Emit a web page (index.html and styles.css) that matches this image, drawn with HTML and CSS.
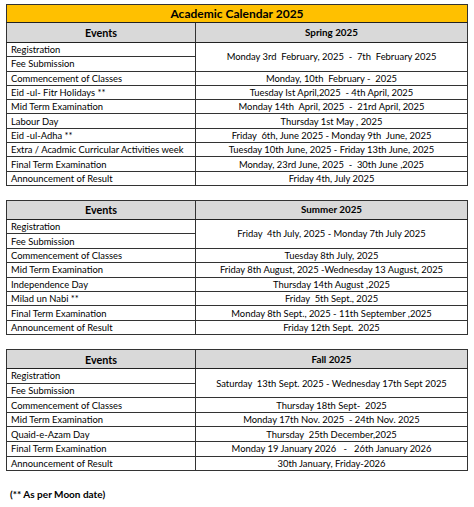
FILE: index.html
```html
<!DOCTYPE html>
<html>
<head>
<meta charset="utf-8">
<link rel="stylesheet" href="styles.css">
</head>
<body>
<div class="page">
  <table class="cal t1">
    <colgroup><col class="c1"><col class="c2"></colgroup>
    <tr class="title"><td colspan="2">Academic Calendar 2025</td></tr>
    <tr class="head"><td class="ev">Events</td><td class="term">Spring 2025</td></tr>
    <tr><td>Registration</td><td class="d" rowspan="2">Monday 3rd&nbsp; February, 2025&nbsp; -&nbsp; 7th&nbsp; February 2025</td></tr>
    <tr><td>Fee Submission</td></tr>
    <tr><td>Commencement of Classes</td><td class="d">Monday, 10th&nbsp; February -&nbsp; 2025</td></tr>
    <tr><td>Eid -ul- Fitr Holidays **</td><td class="d">Tuesday Ist April,2025&nbsp; - 4th April, 2025</td></tr>
    <tr><td>Mid Term Examination</td><td class="d">Monday 14th&nbsp; April, 2025&nbsp; -&nbsp; 21rd April, 2025</td></tr>
    <tr><td>Labour Day</td><td class="d">Thursday 1st May , 2025</td></tr>
    <tr><td>Eid -ul-Adha **</td><td class="d">Friday&nbsp; 6th, June 2025 - Monday 9th&nbsp; June, 2025</td></tr>
    <tr><td>Extra / Acadmic Curricular Activities week</td><td class="d">Tuesday 10th June, 2025 - Friday 13th June, 2025</td></tr>
    <tr><td>Final Term Examination</td><td class="d">Monday, 23rd June, 2025&nbsp; -&nbsp; 30th June ,2025</td></tr>
    <tr><td>Announcement of Result</td><td class="d">Friday 4th, July 2025</td></tr>
  </table>

  <table class="cal t2">
    <colgroup><col class="c1"><col class="c2"></colgroup>
    <tr class="head"><td class="ev">Events</td><td class="term">Summer 2025</td></tr>
    <tr><td>Registration</td><td class="d" rowspan="2">Friday&nbsp; 4th July, 2025 - Monday 7th July 2025</td></tr>
    <tr><td>Fee Submission</td></tr>
    <tr><td>Commencement of Classes</td><td class="d">Tuesday 8th July, 2025</td></tr>
    <tr><td>Mid Term Examination</td><td class="d">Friday 8th August, 2025 -Wednesday 13 August, 2025</td></tr>
    <tr><td>Independence Day</td><td class="d">Thursday 14th August ,2025</td></tr>
    <tr><td>Milad un Nabi **</td><td class="d">Friday&nbsp; 5th Sept., 2025</td></tr>
    <tr><td>Final Term Examination</td><td class="d">Monday 8th Sept., 2025 - 11th September ,2025</td></tr>
    <tr><td>Announcement of Result</td><td class="d">Friday 12th Sept.&nbsp; 2025</td></tr>
  </table>

  <table class="cal t3">
    <colgroup><col class="c1"><col class="c2"></colgroup>
    <tr class="head"><td class="ev">Events</td><td class="term">Fall 2025</td></tr>
    <tr><td>Registration</td><td class="d" rowspan="2">Saturday&nbsp; 13th Sept. 2025 - Wednesday 17th Sept 2025</td></tr>
    <tr><td>Fee Submission</td></tr>
    <tr><td>Commencement of Classes</td><td class="d">Thursday 18th Sept-&nbsp; 2025</td></tr>
    <tr><td>Mid Term Examination</td><td class="d">Monday 17th Nov. 2025&nbsp; - 24th Nov. 2025</td></tr>
    <tr><td>Quaid-e-Azam Day</td><td class="d">Thursday&nbsp; 25th December,2025</td></tr>
    <tr><td>Final Term Examination</td><td class="d">Monday 19 January 2026&nbsp;&nbsp; -&nbsp;&nbsp; 26th January 2026</td></tr>
    <tr><td>Announcement of Result</td><td class="d">30th January, Friday-2026</td></tr>
  </table>

  <p class="note">(** As per Moon date)</p>
</div>
</body>
</html>
```

FILE: styles.css
```css
html, body {
  margin: 0;
  padding: 0;
  background: #ffffff;
}

body {
  font-family: "Lato", "Open Sans", sans-serif;
  color: #000000;
}

.page {
  display: flex;
  flex-direction: column;
  gap: 14px;
  padding: 4px 0 0 6px;
  width: 462px;
}

.cal {
  width: 462px;
  border-collapse: collapse;
  border: 1.5px solid #222222;
  table-layout: fixed;
  font-size: 9.4px;
}

.cal col.c1 {
  width: 189px;
}

.cal tr {
  height: 14.3px;
}

.t2 tr {
  height: 14.4px;
}

.t3 tr {
  height: 14.6px;
}

.cal td {
  border: 1px solid #333333;
  padding: 0 0 0 4px;
  line-height: 11px;
  white-space: nowrap;
  overflow: hidden;
}

.cal td.d {
  text-align: center;
  padding: 0;
}

.cal tr.title {
  height: 18px;
}

.cal .title td {
  background: #ffc000;
  text-align: center;
  font-weight: 700;
  font-size: 12px;
  padding: 0;
  border-bottom: 1.5px solid #222222;
}

.cal tr.head {
  height: 19px;
}

.t1 tr.head {
  height: 20px;
}

.cal .head td {
  background: #d9d9d9;
  text-align: center;
  font-weight: 700;
  padding: 0;
  border-bottom: 1.5px solid #222222;
}

.cal .head td.ev {
  font-size: 10.8px;
}

.cal .head td.term {
  font-size: 9.8px;
}

.note {
  margin: 3px 0 0 4px;
  font-size: 10px;
  font-weight: 700;
}
```
